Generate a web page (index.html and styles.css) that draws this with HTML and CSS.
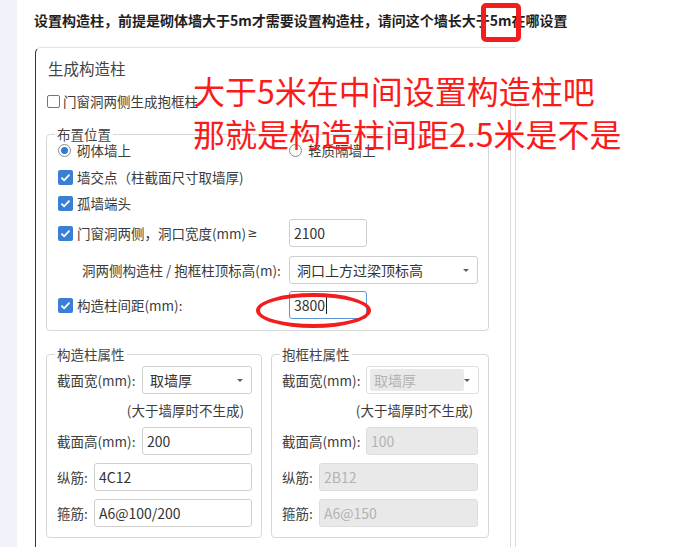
FILE: index.html
```html
<!DOCTYPE html>
<html lang="zh-CN">
  <head>
    <meta charset="UTF-8" />
    <meta name="viewport" content="width=device-width, initial-scale=1.0" />
    <title>生成构造柱</title>
    <link rel="stylesheet" href="styles.css">
  </head>
  <body>
    <div class="page">
      <div class="side"></div>
      <div class="main">
        <p class="question">设置构造柱，前提是砌体墙大于5m才需要设置构造柱，请问这个墙长大于<span class="mark">5m</span>在哪设置</p>

        <!-- Dialog screenshot -->
        <div class="dialog">
          <div class="panel">
            <div class="title">生成构造柱</div>
            <div class="check-row"><span class="cb"></span>门窗洞两侧生成抱框柱</div>

            <fieldset class="group place">
              <legend>布置位置</legend>
              <div class="radio-row">
                <span class="opt"><span class="rb on"></span>砌体墙上</span>
                <span class="opt"><span class="rb"></span>轻质隔墙上</span>
              </div>
              <div class="row r-cross">
                <span class="cb on"><svg viewBox="0 0 15 15"><path d="M3.4 7.6l2.7 2.7 5.4-5.7" /></svg></span>墙交点（柱截面尺寸取墙厚)
              </div>
              <div class="row r-end">
                <span class="cb on"><svg viewBox="0 0 15 15"><path d="M3.4 7.6l2.7 2.7 5.4-5.7" /></svg></span>孤墙端头
              </div>
              <div class="row r-field r-door">
                <span class="opt"><span class="cb on"><svg viewBox="0 0 15 15"><path d="M3.4 7.6l2.7 2.7 5.4-5.7" /></svg></span>门窗洞两侧，洞口宽度(mm)<span class="ge">≥</span></span>
                <div class="field short">2100</div>
              </div>
              <div class="row r-field r-top">
                <span class="opt indent">洞两侧构造柱 / 抱框柱顶标高(m):</span>
                <div class="field select wide"><span>洞口上方过梁顶标高</span><i class="arrow"></i></div>
              </div>
              <div class="row r-field r-gap">
                <span class="opt"><span class="cb on"><svg viewBox="0 0 15 15"><path d="M3.4 7.6l2.7 2.7 5.4-5.7" /></svg></span>构造柱间距(mm):</span>
                <div class="field short focus">3800<span class="caret"></span></div>
              </div>
            </fieldset>

            <div class="props">
              <fieldset class="group prop">
                <legend>构造柱属性</legend>
                <div class="row r-first">
                  <span class="lbl">截面宽(mm):</span>
                  <div class="field select"><span>取墙厚</span><i class="arrow"></i></div>
                </div>
                <div class="hint">(大于墙厚时不生成)</div>
                <div class="row r-next">
                  <span class="lbl">截面高(mm):</span>
                  <div class="field">200</div>
                </div>
                <div class="row r-next">
                  <span class="lbl bar">纵筋:</span>
                  <div class="field">4C12</div>
                </div>
                <div class="row r-next">
                  <span class="lbl bar">箍筋:</span>
                  <div class="field">A6@100/200</div>
                </div>
              </fieldset>

              <fieldset class="group prop off">
                <legend>抱框柱属性</legend>
                <div class="row r-first">
                  <span class="lbl">截面宽(mm):</span>
                  <div class="field select"><span class="val">取墙厚</span><i class="arrow"></i></div>
                </div>
                <div class="hint">(大于墙厚时不生成)</div>
                <div class="row r-next">
                  <span class="lbl">截面高(mm):</span>
                  <div class="field">100</div>
                </div>
                <div class="row r-next">
                  <span class="lbl bar">纵筋:</span>
                  <div class="field">2B12</div>
                </div>
                <div class="row r-next">
                  <span class="lbl bar">箍筋:</span>
                  <div class="field">A6@150</div>
                </div>
              </fieldset>
            </div>
          </div>
          <div class="rail"></div>

          <!-- Annotations drawn over the screenshot -->
          <div class="note">大于5米在中间设置构造柱吧<br>那就是构造柱间距2.5米是不是</div>
          <div class="circle"></div>
        </div>
      </div>
    </div>
  </body>
</html>
```

FILE: styles.css
```css
html, body {
  margin: 0;
  height: 547px;
  overflow: hidden;
  background-color: #ffffff;
}
body {
  font-family: "Noto Sans CJK SC", "Noto Sans", sans-serif;
  color: #3c3c3c;
}
.page {
  display: flex;
  height: 547px;
}
.side {
  width: 17px;
  flex-shrink: 0;
  background-color: #f0f3f9; /* left pane strip */
}
.main {
  flex: 1;
  padding: 10px 0 0 17px;
}
.question {
  margin: 0 0 17px;
  font-size: 14px;
  font-weight: bold;
  line-height: 20px;
  color: #1f1f1f;
}
.mark {
  position: relative;
}
.mark::after {
  content: "";
  position: absolute;
  left: -9px;
  right: -9px;
  top: -7px;
  bottom: -12px;
  border: 5px solid #f41c1c;
  border-radius: 5px;
}
/* Dialog */
.dialog {
  position: relative;
  display: flex;
  width: 481px;
  height: 500px;
  margin-left: 1px;
  box-sizing: border-box;
  border-left: 1px solid #333333;
  border-top: 1px solid #e4e4e4;
  border-top-left-radius: 6px;
  font-size: 13.5px;
}
.panel {
  width: 474px;
  padding-left: 10px;
  box-sizing: border-box;
}
.title {
  margin-left: 2px;
  padding-top: 9px;
  font-size: 15.5px;
  line-height: 22px;
  color: #444444;
}
.check-row {
  display: flex;
  align-items: center;
  height: 20px;
  margin: 12px 0 0 1px;
}
.cb {
  width: 13px;
  height: 13px;
  box-sizing: border-box;
  border: 1px solid #767676;
  border-radius: 2px;
  margin-right: 3px;
  flex-shrink: 0;
  background-color: #ffffff;
}
.cb.on {
  width: 15px;
  height: 15px;
  border: none;
  background-color: #3a7fd6;
  margin-right: 4px;
}
.cb svg {
  display: block;
  width: 15px;
  height: 15px;
}
.cb path {
  fill: none;
  stroke: #ffffff;
  stroke-width: 1.8;
}
.ge {
  font-family: "DejaVu Sans", sans-serif;
  font-size: 12px;
  margin-left: 1px;
}
.rb {
  width: 13px;
  height: 13px;
  box-sizing: border-box;
  border: 1px solid #8a8a8a;
  border-radius: 50%;
  margin-right: 6px;
  flex-shrink: 0;
  display: flex;
  align-items: center;
  justify-content: center;
}
.rb.on::before {
  content: "";
  width: 7px;
  height: 7px;
  border-radius: 50%;
  background-color: #2f7ad8;
}
/* Group boxes */
.group {
  margin: 0;
  min-width: 0;
  box-sizing: border-box;
  border: 1px solid #d7d7d7;
  border-radius: 4px;
}
.group legend {
  padding: 0 2px;
  margin-left: -3px;
  line-height: 14px;
  color: #444444;
}
.place {
  width: 443px;
  margin-top: 16px;
  padding: 0 10px 11px 11px;
}
.radio-row {
  display: flex;
  align-items: center;
  height: 18px;
}
.opt {
  display: flex;
  align-items: center;
  width: 231px;
  flex-shrink: 0;
}
.opt.indent {
  width: 207px;
  padding-left: 24px;
}
.row {
  display: flex;
  align-items: center;
  height: 22px;
}
.r-cross { margin-top: 7px; }
.r-end { margin-top: 4px; }
.r-field { height: 28px; }
.r-door { margin-top: 5px; }
.r-top { margin-top: 9px; }
.r-gap { margin-top: 7px; }
/* Inputs */
.field {
  display: flex;
  align-items: center;
  height: 28px;
  flex: 1;
  box-sizing: border-box;
  border: 1px solid #cfcfcf;
  border-radius: 3px;
  padding: 0 4px;
  font-size: 14px;
  color: #333333;
  background-color: #ffffff;
}
.field.short {
  flex: none;
  width: 78px;
}
.field.wide {
  flex: none;
  width: 189px;
}
.field.focus {
  border-color: #5c97d6;
}
.caret {
  width: 1px;
  height: 17px;
  margin-left: 1px;
  background-color: #222222;
}
.select {
  justify-content: space-between;
  padding: 0 8px 0 7px;
}
.arrow {
  width: 0;
  height: 0;
  border-left: 3px solid transparent;
  border-right: 3px solid transparent;
  border-top: 3px solid #606060;
}
/* Property boxes */
.props {
  display: flex;
  gap: 9px;
  margin-top: 16px;
}
.prop {
  width: 216px;
  padding: 0 9px 10px 10px;
}
.prop.off {
  width: 218px;
  padding-right: 10px;
}
.prop legend {
  margin-left: -2px;
}
.prop .row {
  height: 28px;
}
.r-first { margin-top: 5px; }
.r-next { margin-top: 8px; }
.lbl {
  width: 85px;
  flex-shrink: 0;
}
.off .lbl {
  width: 84px;
}
.lbl.bar,
.off .lbl.bar {
  width: 37px;
}
.hint {
  margin-top: 7px;
  line-height: 18px;
  text-align: right;
  padding-right: 8px;
}
.off .hint {
  padding-right: 5px;
}
.off .field {
  background-color: #e9e9e9;
  border-color: #dddddd;
  color: #b3b3b3;
}
.off .select {
  background-color: #ffffff;
  padding: 2px 8px 2px 3px;
  align-items: stretch;
}
.off .select .val {
  display: flex;
  align-items: center;
  width: 90px;
  padding-left: 4px;
  background-color: #e9e9e9;
  border-radius: 2px;
}
.off .select .arrow {
  align-self: center;
}
.rail {
  width: 6px;
  margin-top: 57px;
  box-sizing: border-box;
  border-left: 1px solid #dcdcdc;
  border-right: 1px solid #dcdcdc;
}
/* Red annotations */
.note {
  position: absolute;
  left: 157px;
  top: 21px;
  font-size: 32px;
  line-height: 43px;
  color: #fa1b1b;
  white-space: nowrap;
}
.circle {
  position: absolute;
  left: 220px;
  top: 245px;
  width: 115px;
  height: 35px;
  box-sizing: border-box;
  border: 4.5px solid #f41c1c;
  border-radius: 50%;
}
```
